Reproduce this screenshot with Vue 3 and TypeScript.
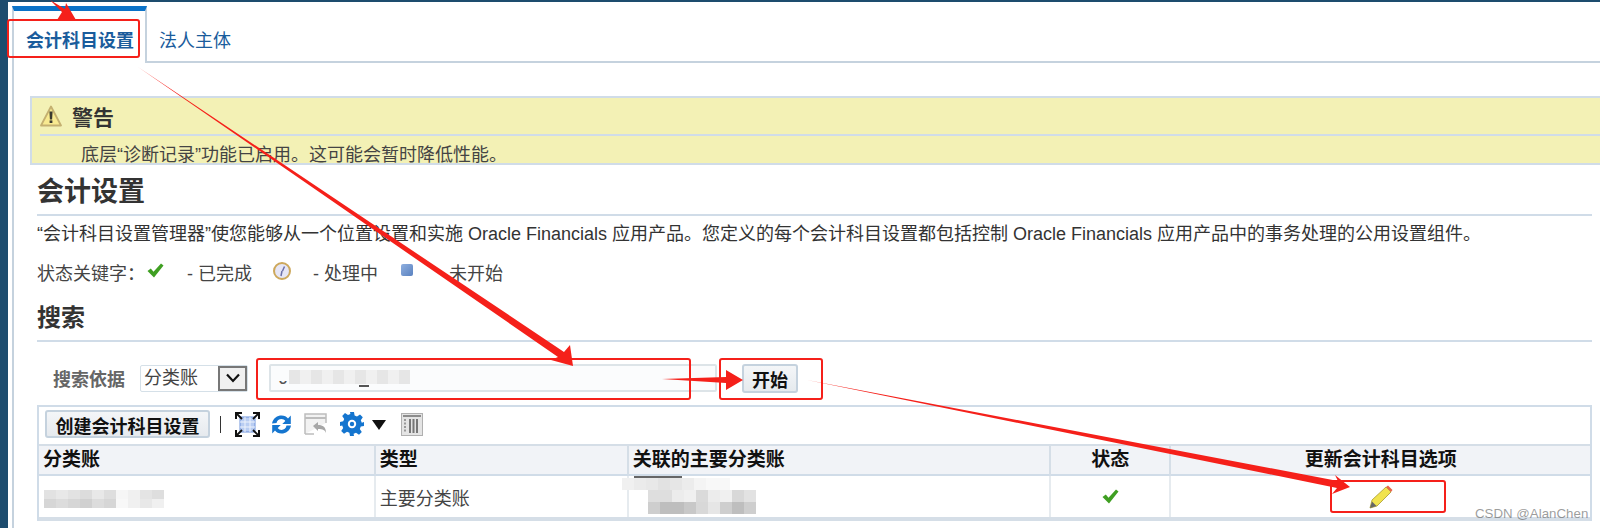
<script setup lang="ts">
interface Column {
  title: string;
  width: number;
  center?: boolean;
}

const columns: Column[] = [
  { title: '分类账', width: 337 },
  { title: '类型', width: 253 },
  { title: '关联的主要分类账', width: 423 },
  { title: '状态', width: 120, center: true },
  { title: '更新会计科目选项', width: 419, center: true }
];

// 马赛克块，[x, y, 灰度]
const blurCell = [
  [0, 0, 226], [12, 0, 232], [24, 0, 226], [36, 0, 220], [48, 0, 232], [60, 0, 222], [72, 0, 246], [84, 0, 240], [96, 0, 228], [108, 0, 222],
  [0, 9, 214], [12, 9, 220], [24, 9, 214], [36, 9, 208], [48, 9, 220], [60, 9, 214], [72, 9, 248], [84, 9, 240], [96, 9, 232], [108, 9, 240]
];
const blurLinked = [
  [0, 2, 240], [12, 2, 235], [24, 2, 232], [36, 2, 226], [48, 2, 230], [60, 2, 236], [72, 2, 244], [84, 2, 248], [96, 2, 248],
  [26, 14, 222], [38, 14, 222], [50, 14, 236], [62, 14, 240], [74, 14, 218], [86, 14, 236], [98, 14, 240], [110, 14, 216], [122, 14, 226],
  [26, 26, 206], [38, 26, 190], [50, 26, 190], [62, 26, 200], [74, 26, 216], [86, 26, 230], [98, 26, 206], [110, 26, 190], [122, 26, 206]
];
const blurInput = [0, 11, 22, 33, 44, 55, 66, 77, 88, 99, 110];

const grey = (v: number) => `rgb(${v},${v},${v})`;
</script>

<template>
  <div class="page">
    <div class="panel">
      <div class="tabs">
        <div class="tab active">会计科目设置</div>
        <div class="tab-rest"><span class="tab-link">法人主体</span></div>
      </div>

      <div class="content">
        <div class="warning">
          <div class="warning-head">
            <svg width="22" height="22" viewBox="0 0 22 22">
              <path d="M11 1.5 21 20.5H1z" fill="#f8ea90" stroke="#c4b070" stroke-width="1.8" stroke-linejoin="round" />
              <path d="M9.4 6.5h3.2l-.5 8h-2.200z" fill="#3a3a30" />
              <rect x="9.600" y="15.400" width="2.800" height="2.600" fill="#3a3a30" />
            </svg>
            <span>警告</span>
          </div>
          <p class="warning-text">底层“诊断记录”功能已启用。这可能会暂时降低性能。</p>
        </div>

        <div class="main">
          <h1>会计设置</h1>
          <p class="desc">“会计科目设置管理器”使您能够从一个位置设置和实施 Oracle Financials 应用产品。您定义的每个会计科目设置都包括控制 Oracle Financials 应用产品中的事务处理的公用设置组件。</p>

          <div class="legend">
            <span class="legend-label">状态关键字：</span>
            <svg class="ico-check" width="17" height="15" viewBox="0 0 17 15">
              <path d="M.5 8 3.800 5.500 6.500 8.800 14 .5l2.500 2L7 14.500z" fill="#3f9f22" />
            </svg>
            <span class="legend-done">- 已完成</span>
            <svg class="ico-clock" width="18" height="18" viewBox="0 0 18 18">
              <circle cx="9" cy="9" r="8" fill="#e6e6f6" stroke="#cda85c" stroke-width="2" />
              <path d="M9.500 9 11.500 4.500M9 9 8 14" stroke="#6a6fa8" stroke-width="1.500" fill="none" />
            </svg>
            <span class="legend-doing">- 处理中</span>
            <span class="ico-square"></span>
            <span class="legend-todo">未开始</span>
          </div>

          <h2>搜索</h2>

          <div class="search">
            <label>搜索依据</label>
            <div class="select">
              <span>分类账</span>
              <i>
                <svg width="16" height="10" viewBox="0 0 16 10">
                  <path d="M2 1.500 8 8l6-6.500" fill="none" stroke="#111" stroke-width="2.200" />
                </svg>
              </i>
            </div>
            <div class="input">
              <span class="input-char">J</span>
              <span class="input-cover"></span>
              <span class="input-blur">
                <b v-for="x in blurInput" :key="x" :style="{ background: grey(x % 22 ? 240 : 230) }"></b>
              </span>
              <span class="input-under"></span>
            </div>
            <button class="go">开始</button>
          </div>

          <div class="table-box">
            <div class="toolbar">
              <button class="create">创建会计科目设置</button>
              <span class="sep"></span>
              <svg class="ico-expand" width="25" height="25" viewBox="0 0 25 25">
                <rect x="5" y="5" width="15" height="15" fill="#b9cdf2" stroke="#6f93dc" />
                <path d="M5 10h15M5 15h15M10 5v15M15 5v15" stroke="#eef3fc" />
                <path d="M1 7V1h6M18 1h6v6M24 18v6h-6M7 24H1v-6" fill="none" stroke="#111" stroke-width="2" />
                <path d="M2 2l5 5M23 2l-5 5M23 23l-5-5M2 23l5-5" stroke="#111" stroke-width="1.800" />
              </svg>
              <svg class="ico-refresh" width="21" height="21" viewBox="0 0 21 21">
                <path d="M1 9.500C2 4 6.500 1.500 10.500 1.500c3 0 5 1 6.500 3L19.800 1.500v8.500h-8.500l3-3c-1-1.200-2.300-1.900-3.800-1.900-2.500 0-4.500 1.500-5 3.900z" fill="#1475cf" />
                <path d="M20 11.500c-1 5.500-5.500 8-9.500 8-3 0-5-1-6.500-3L1.200 19.500V11h8.500l-3 3c1 1.200 2.300 1.900 3.800 1.900 2.500 0 4.500-1.500 5-4.400z" fill="#1475cf" />
              </svg>
              <svg class="ico-undo" width="24" height="24" viewBox="0 0 24 24">
                <path d="M1 22V2h21v9" fill="#f2f2f2" stroke="#bdbdbd" stroke-width="1.500" />
                <path d="M1 6h21" stroke="#bdbdbd" stroke-width="2" />
                <path d="M1 22h9" stroke="#bdbdbd" stroke-width="1.500" />
                <path d="M9 14l5-4v3c5 0 8 2 8 8-1-3-3-4-8-4v2z" fill="#a6a6a6" />
              </svg>
              <svg class="ico-gear" width="24" height="24" viewBox="0 0 24 24">
                <path d="M10 0h4l.6 3.500 2.400 1 3-2 2.800 2.800-2 3 1 2.400L24 10v4l-3.200.6-1 2.400 2 3-2.800 2.800-3-2-2.400 1L14 24h-4l-.6-3.200-2.400-1-3 2-2.800-2.800 2-3-1-2.400L0 14v-4l3.200-.7 1-2.400-2-3L5 1.100l3 2 2.400-1z" fill="#1475cf" />
                <circle cx="12" cy="12" r="4.200" fill="#fff" />
                <circle cx="12" cy="12" r="2.200" fill="#1475cf" />
              </svg>
              <svg class="ico-caret" width="14" height="10" viewBox="0 0 14 10">
                <path d="M0 0h14L7 10z" fill="#111" />
              </svg>
              <svg class="ico-cols" width="22" height="23" viewBox="0 0 22 23">
                <rect x=".5" y=".5" width="21" height="22" fill="#e4e4e4" stroke="#b0b0b0" />
                <path d="M2 3h18" stroke="#8c8c8c" stroke-width="2" />
                <path d="M4 6v14" stroke="#999" stroke-width="2" stroke-dasharray="2 1.500" />
                <path d="M9 6v14M12.500 6v14M16 6v14" stroke="#777" stroke-width="2" />
              </svg>
            </div>

            <div class="grid">
              <div
                v-for="col in columns"
                :key="col.title"
                class="th"
                :class="{ center: col.center }"
                :style="{ width: col.width + 'px' }"
              >{{ col.title }}</div>
            </div>

            <div class="grid row">
              <div class="td" :style="{ width: columns[0].width + 'px' }">
                <svg class="blur-cell" width="122" height="18" viewBox="0 0 122 18">
                  <rect v-for="(b, i) in blurCell" :key="i" :x="b[0]" :y="b[1]" width="12" height="9" :fill="grey(b[2])" />
                </svg>
              </div>
              <div class="td" :style="{ width: columns[1].width + 'px' }">主要分类账</div>
              <div class="td" :style="{ width: columns[2].width + 'px' }">
                <svg class="blur-linked" width="140" height="38" viewBox="0 0 140 38">
                  <rect x="12" y="0" width="48" height="2" fill="#666" />
                  <rect v-for="(b, i) in blurLinked" :key="i" :x="b[0]" :y="b[1]" width="12" height="12" :fill="grey(b[2])" />
                </svg>
              </div>
              <div class="td center" :style="{ width: columns[3].width + 'px' }">
                <svg width="17" height="15" viewBox="0 0 17 15">
                  <path d="M.5 8 3.800 5.500 6.500 8.800 14 .5l2.500 2L7 14.500z" fill="#3f9f22" />
                </svg>
              </div>
              <div class="td center" :style="{ width: columns[4].width + 'px' }">
                <svg width="24" height="24" viewBox="0 0 24 24">
                  <path d="M1 23 3 15 17 2 22 7 8 21z" fill="#f1e34e" stroke="#a89a30" stroke-width=".8" />
                  <path d="M17 2 19 .5 23.500 5 22 7z" fill="#e8664a" />
                  <path d="M1 23 3 16.500 7.500 21z" fill="#666" />
                </svg>
              </div>
            </div>
            <div class="table-foot"></div>
          </div>
        </div>
      </div>
    </div>

    <!-- 截图上的红色标注 -->
    <svg class="marks" width="1600" height="528" viewBox="0 0 1600 528">
      <g fill="none" stroke="#f5201a" stroke-width="2">
        <rect x="8" y="20" width="131" height="37" rx="2" />
        <rect x="257" y="359" width="433" height="40" rx="2" />
        <rect x="720" y="359" width="102" height="40" rx="2" />
        <rect x="1331" y="481" width="114" height="31" rx="2" />
      </g>
      <g fill="#f5201a">
        <path d="M50 0 62 12 57 20 76 20 66 3 65 9z" />
        <path d="M138 67 564 352 570 345 573 366 551 360 558 357z" />
        <path d="M662 379 726 377 726 370 743 380 726 390 726 383z" />
        <path d="M807 380 1338 481 1335 475 1350 487 1332 494 1337 488z" />
      </g>
    </svg>
    <div class="watermark">CSDN @AlanChen</div>
  </div>
</template>

<style>
html, body {
  margin: 0;
  background: #1d4c6e;
}
</style>

<style scoped>
.page {
  position: relative;
  box-sizing: border-box;
  width: 1600px;
  height: 528px;
  padding: 2px 0 0 8px;
  overflow: hidden;
  background: #1d4c6e;
  color: #333;
  font-family: "Liberation Sans", "Noto Sans CJK SC", sans-serif;
  font-size: 18px;
}

.panel {
  height: 100%;
  background: #fff;
}

.tabs {
  display: flex;
  height: 61px;
  box-sizing: border-box;
  padding: 4px 0 0 4px;
}

.tab.active {
  box-sizing: border-box;
  width: 135px;
  padding: 17px 0 0 12px;
  border-top: 5px solid #0a72c8;
  border-left: 2px solid #c5d2de;
  border-right: 2px solid #c5d2de;
  color: #1a5c9c;
  font-weight: 700;
  line-height: 26px;
}

.tab-rest {
  flex: 1;
  padding: 22px 0 0 12px;
  border-bottom: 2px solid #c5d2de;
  color: #1a5c9c;
  line-height: 26px;
}

.content {
  margin-left: 4px;
  height: 465px;
  padding-top: 33px;
  box-sizing: border-box;
  border-left: 2px solid #c5d2de;
}

.warning {
  box-sizing: border-box;
  height: 69px;
  margin-left: 16px;
  padding: 0 0 0 8px;
  overflow: hidden;
  background: #f3f1b5;
  border: 2px solid #d0dce8;
  border-right: 0;
}

.warning-head {
  display: flex;
  align-items: center;
  gap: 10px;
  height: 38px;
  box-sizing: border-box;
  border-bottom: 2px solid #d0dce8;
  color: #333;
  font-size: 21px;
  font-weight: 700;
}

.warning-text {
  margin: 7px 0 0 41px;
  line-height: 24px;
  color: #444;
}

.main {
  padding: 11px 8px 0 23px;
}

h1 {
  margin: 0;
  height: 38px;
  border-bottom: 2px solid #d0dce8;
  color: #333;
  font-size: 27px;
  line-height: 32px;
}

.desc {
  margin: 6px 0 0;
  line-height: 24px;
  font-size: 18px;
  white-space: nowrap;
  color: #333;
}

.legend {
  display: flex;
  align-items: center;
  height: 24px;
  margin-top: 14px;
  color: #444;
}

.ico-check {
  margin: 0 0 3px 2px;
}

.legend-done {
  margin-left: 23px;
}

.ico-clock {
  margin: 0 0 2px 21px;
}

.legend-doing {
  margin-left: 22px;
}

.ico-square {
  width: 12px;
  height: 12px;
  margin: 0 0 4px 23px;
  border-radius: 2px;
  background: linear-gradient(135deg, #8fafdf, #5a82c0);
}

.legend-todo {
  margin-left: 36px;
}

h2 {
  margin: 18px 0 0;
  height: 38px;
  border-bottom: 2px solid #d0dce8;
  color: #333;
  font-size: 24px;
  line-height: 32px;
}

.search {
  display: flex;
  align-items: center;
  height: 30px;
  margin-top: 21px;
}

.search label {
  margin-left: 16px;
  color: #666;
  font-weight: 700;
}

.select {
  display: flex;
  justify-content: space-between;
  box-sizing: border-box;
  width: 108px;
  height: 27px;
  margin-left: 15px;
  padding-left: 3px;
  border: 1px solid #d5e0e8;
  border-radius: 2px;
  color: #444;
  line-height: 24px;
}

.select i {
  display: flex;
  align-items: center;
  justify-content: center;
  box-sizing: border-box;
  width: 29px;
  border: 2px solid #777;
  background: #f0f0f0;
}

.input {
  position: relative;
  box-sizing: border-box;
  width: 448px;
  height: 28px;
  margin-left: 21px;
  padding-left: 8px;
  border: 2px solid #dde4e8;
  border-radius: 2px;
  background: #fbfcfd;
  color: #555;
  line-height: 24px;
}

/* 遮住 J 的上半部分 */
.input-cover {
  position: absolute;
  top: 2px;
  left: 5px;
  width: 14px;
  height: 13px;
  background: #fbfcfd;
}

.input-blur {
  position: absolute;
  top: 4px;
  left: 18px;
  display: flex;
}

.input-blur b {
  width: 11px;
  height: 14px;
}

.input-under {
  position: absolute;
  top: 19px;
  left: 88px;
  width: 10px;
  height: 2px;
  background: #555;
}

.go {
  box-sizing: border-box;
  width: 56px;
  height: 29px;
  margin-left: 25px;
  padding: 0;
  border: 2px solid #c5d2de;
  border-radius: 3px;
  background: linear-gradient(#f4f6f8, #e6eaee);
  color: #111;
  font: 700 18px "Liberation Sans", "Noto Sans CJK SC", sans-serif;
}

.table-box {
  width: 1555px;
  box-sizing: border-box;
  margin-top: 12px;
  border: 2px solid #d0dce8;
  border-bottom: 0;
}

.toolbar {
  display: flex;
  align-items: center;
  height: 37px;
  box-sizing: border-box;
  padding: 0 0 3px 6px;
}

.create {
  box-sizing: border-box;
  width: 165px;
  height: 28px;
  padding: 0;
  border: 2px solid #c5d2de;
  border-radius: 3px;
  background: linear-gradient(#f4f6f8, #e6eaee);
  color: #111;
  font: 700 18px "Liberation Sans", "Noto Sans CJK SC", sans-serif;
}

.sep {
  width: 1px;
  height: 17px;
  margin-left: 10px;
  background: #333;
}

.ico-expand {
  margin-left: 14px;
}

.ico-refresh {
  margin-left: 11px;
}

.ico-undo {
  margin-left: 12px;
}

.ico-gear {
  margin-left: 12px;
}

.ico-caret {
  margin: 2px 0 0 8px;
}

.ico-cols {
  margin-left: 15px;
}

.grid {
  display: flex;
}

.th {
  box-sizing: border-box;
  height: 32px;
  padding-left: 4px;
  border-top: 2px solid #d5dee7;
  border-bottom: 2px solid #d0dce8;
  border-right: 2px solid #d5dee7;
  background: #f1f3f7;
  color: #111;
  font-size: 19px;
  font-weight: 700;
  line-height: 28px;
}

.th:last-child,
.td:last-child {
  border-right: 0;
}

.th.center,
.td.center {
  justify-content: center;
  padding-left: 0;
  text-align: center;
}

.row {
  height: 41px;
}

.td {
  position: relative;
  display: flex;
  align-items: center;
  box-sizing: border-box;
  padding-left: 4px;
  border-right: 2px solid #e6ebef;
  color: #444;
}

.blur-cell {
  position: absolute;
  top: 14px;
  left: 5px;
}

.blur-linked {
  position: absolute;
  top: 0;
  left: -7px;
}

.table-foot {
  height: 4px;
  background: #d5dee7;
}

.marks {
  position: absolute;
  top: 0;
  left: 0;
  pointer-events: none;
}

.watermark {
  position: absolute;
  top: 505px;
  left: 1475px;
  color: rgba(90, 90, 90, 0.6);
  font-family: "Liberation Sans", sans-serif;
  font-size: 13.300px;
  line-height: 18px;
}
</style>
